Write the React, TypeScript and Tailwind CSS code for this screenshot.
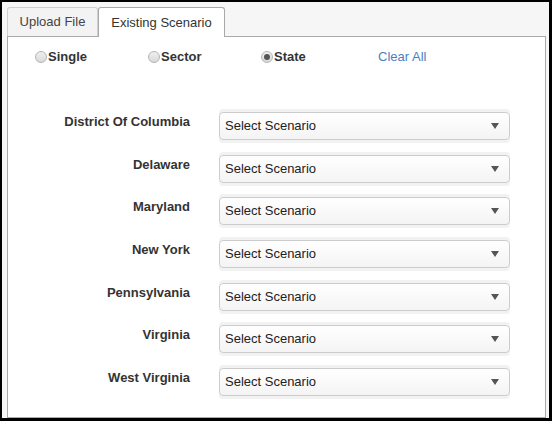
import React from "react";

const states = [
  "District Of Columbia",
  "Delaware",
  "Maryland",
  "New York",
  "Pennsylvania",
  "Virginia",
  "West Virginia",
];

function Radio({ checked }: { checked?: boolean }) {
  return (
    <span className="inline-flex h-[12px] w-[12px] items-center justify-center rounded-full border border-[#b5b5b5] bg-gradient-to-b from-[#f0f0f0] to-[#d8d8d8]">
      {checked && <span className="h-[6px] w-[6px] rounded-full bg-[#555]" />}
    </span>
  );
}

export default function App() {
  return (
    <div
      className="flex h-[421px] w-[552px] flex-col overflow-hidden border-t-2 border-l-2 border-r-[3px] border-b-[3px] border-black bg-[#f6f6f6] pl-[5px] pr-[3px] pt-[5px] text-[13px] text-[#333]"
      style={{ fontFamily: '"Liberation Sans", Arial, sans-serif' }}
    >
      <div className="relative z-10 flex h-[29px]">
        <div className="flex h-[29px] w-[91px] items-center justify-center rounded-t-[3px] border border-b-0 border-[#cfcfcf] bg-[#f3f3f3] text-[#444]">
          Upload File
        </div>
        <div className="flex h-[30px] w-[127px] items-center justify-center rounded-t-[3px] border border-b-0 border-[#a9a9a9] bg-white text-[#333]">
          Existing Scenario
        </div>
      </div>
      <div className="flex-1 border border-[#a9a9a9] bg-white">
        <div className="flex h-[40px] items-center pt-[1px] pb-[1px]">
          <div className="ml-[27px] flex w-[113px] items-center font-bold">
            <Radio />
            <span className="ml-[1px]">Single</span>
          </div>
          <div className="flex w-[113px] items-center font-bold">
            <Radio />
            <span className="ml-[1px]">Sector</span>
          </div>
          <div className="flex w-[117px] items-center font-bold">
            <Radio checked />
            <span className="ml-[1px]">State</span>
          </div>
          <span className="text-[#4a7fc4]">Clear All</span>
        </div>
        <div className="mt-[35px] flex flex-col gap-[14.67px]">
          {states.map((s) => (
            <div key={s} className="flex items-start">
              <div className="w-[182px] text-right font-bold leading-[20px]">{s}</div>
              <div className="ml-[29px] flex h-[28px] w-[291px] items-center justify-between rounded-[4px] border border-[#cccccc] bg-gradient-to-b from-white to-[#f4f4f4] pl-[5px] pr-[10px] shadow-[0_3px_0_0_#f2f2f2,0_-3px_0_0_#f2f2f2] leading-[20px]">
                <span className="text-[#222]">Select Scenario</span>
                <svg width="8" height="6" viewBox="0 0 8 6">
                  <polygon points="0,0 8,0 4,6" fill="#555" />
                </svg>
              </div>
            </div>
          ))}
        </div>
      </div>
    </div>
  );
}
